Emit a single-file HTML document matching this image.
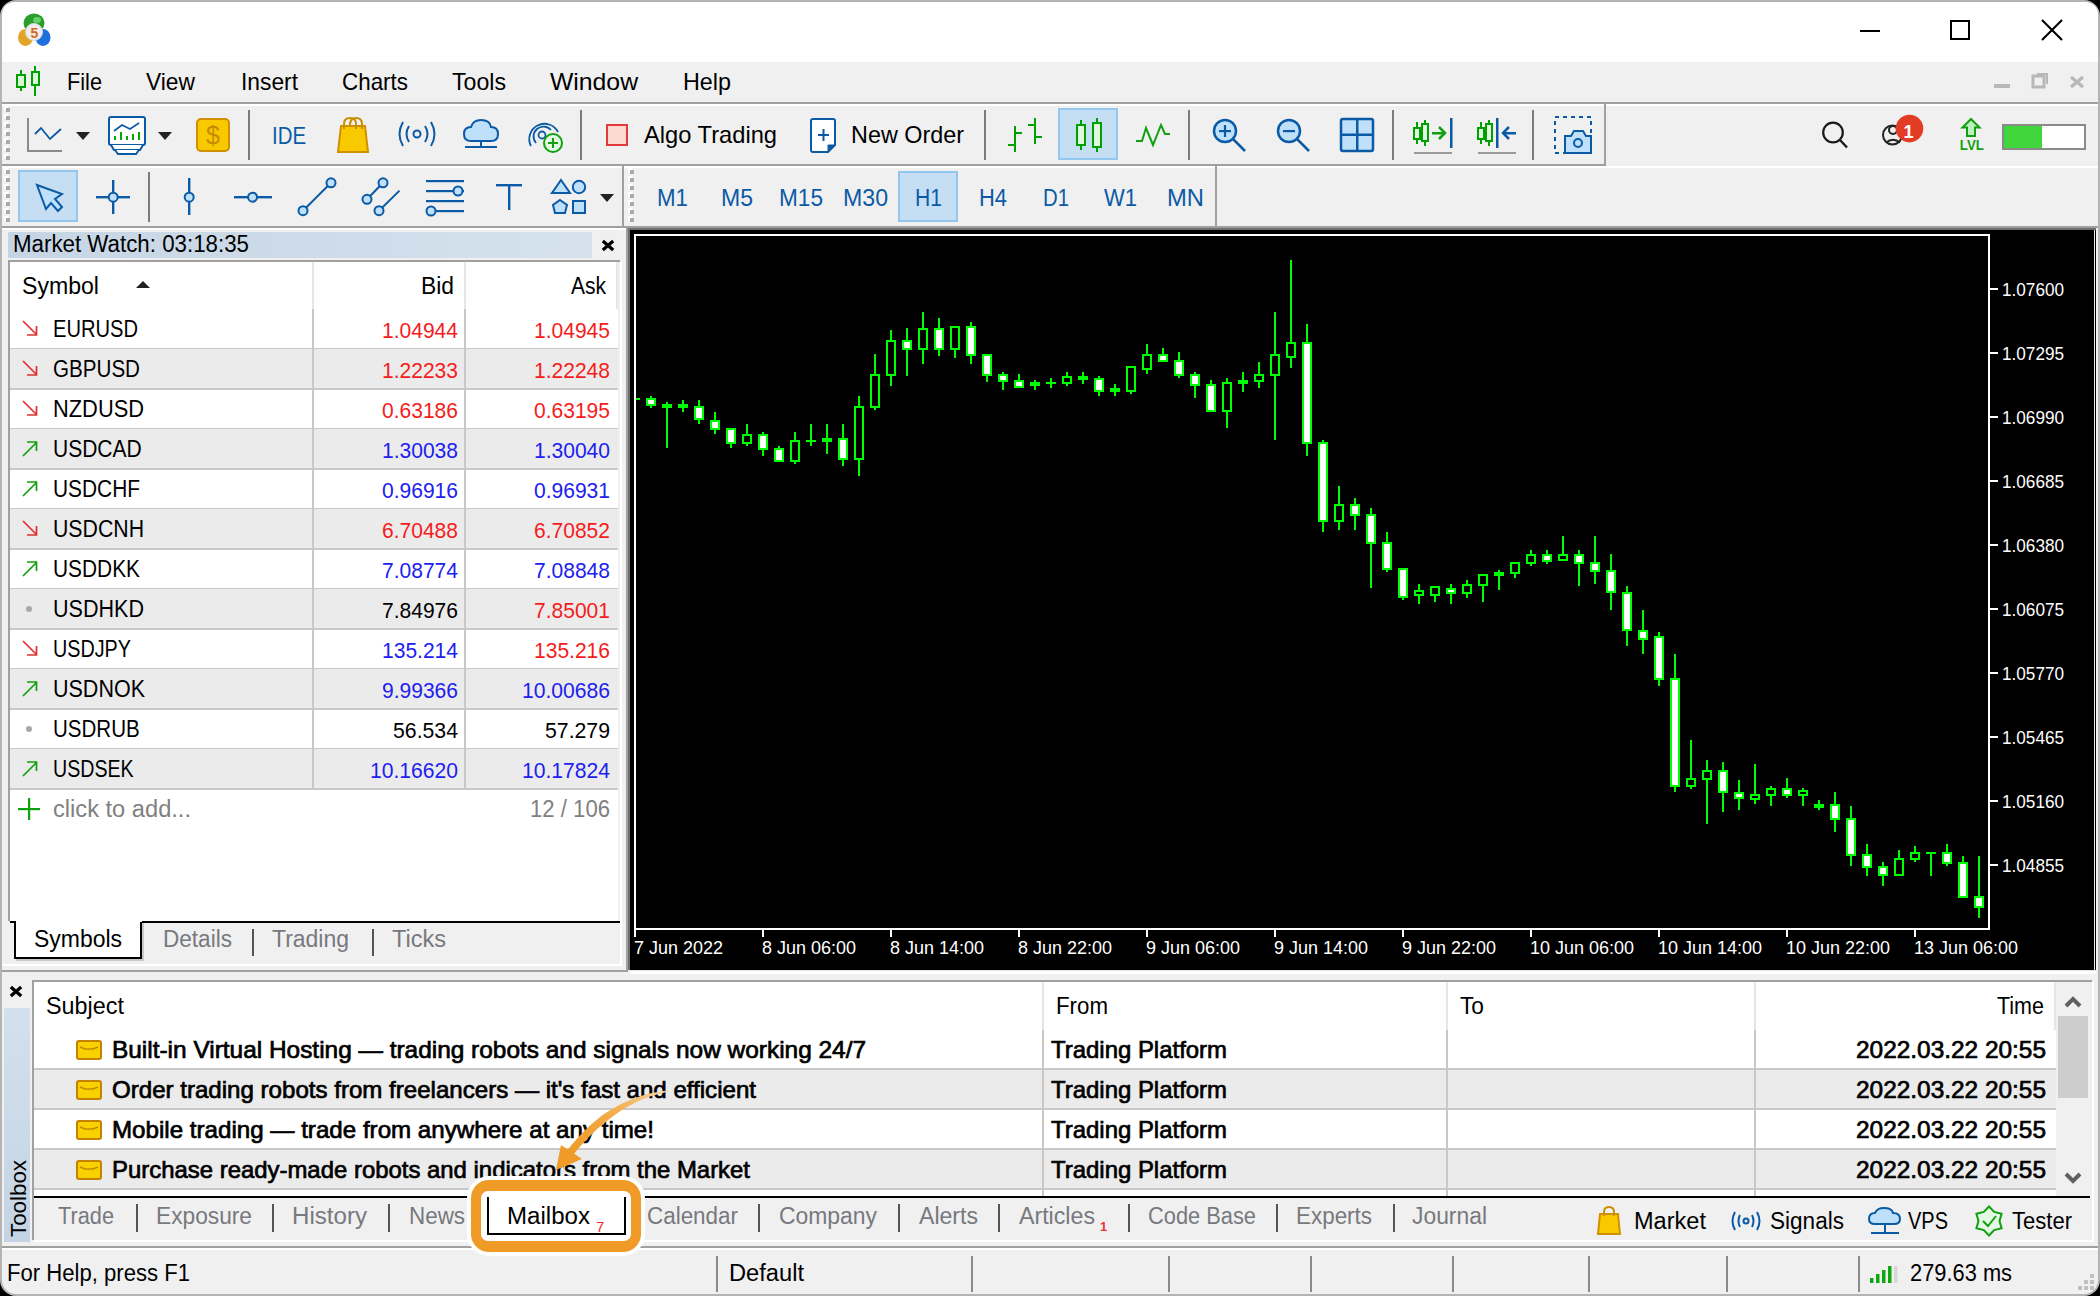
<!DOCTYPE html>
<html><head><meta charset="utf-8"><title>MT5</title>
<style>html,body{margin:0;padding:0;background:#000;overflow:hidden}svg{display:block}text{font-family:"Liberation Sans",sans-serif}</style>
</head><body>
<svg width="2100" height="1296" viewBox="0 0 2100 1296">
<rect x="0" y="0" width="2100" height="1296" fill="#000" />
<rect x="1" y="1" width="2098" height="1294" rx="15" ry="15" fill="#f0f0f0" stroke="#b4b4b4" stroke-width="2"/>
<path d="M2,62 L2,16 Q2,2 16,2 L2084,2 Q2098,2 2098,16 L2098,62 Z" fill="#fff"/>
<rect x="2" y="102" width="2096" height="2" fill="#a0a0a0" />
<rect x="2" y="104" width="2096" height="2" fill="#fff" />
<rect x="2" y="164" width="1604" height="2" fill="#a0a0a0" />
<rect x="2" y="166" width="2096" height="2" fill="#fff" />
<rect x="1604" y="104" width="2" height="61" fill="#a0a0a0" />
<rect x="2" y="226" width="2096" height="2" fill="#a0a0a0" />
<rect x="2" y="228" width="626" height="2" fill="#fff" />
<g id="title">
<rect x="1860" y="30" width="20" height="2" fill="#000" />
<rect x="1951" y="21" width="18" height="18" fill="none" stroke="#000" stroke-width="2"/>
<line x1="2042" y1="20" x2="2062" y2="40" stroke="#000" stroke-width="2.2" />
<line x1="2062" y1="20" x2="2042" y2="40" stroke="#000" stroke-width="2.2" />
<rect x="1994" y="84" width="16" height="4" fill="#b8b8b8" />
<rect x="2033" y="76" width="11" height="11" fill="none" stroke="#b8b8b8" stroke-width="3"/>
<path d="M2037,74 L2047,74 L2047,84" fill="none" stroke="#b8b8b8" stroke-width="2"/>
<line x1="2071" y1="77" x2="2083" y2="87" stroke="#b8b8b8" stroke-width="3.5" />
<line x1="2083" y1="77" x2="2071" y2="87" stroke="#b8b8b8" stroke-width="3.5" />
</g>
<g id="appicon">
<ellipse cx="34" cy="23" rx="10.5" ry="9.5" fill="#2a9e2a"/>
<ellipse cx="37" cy="20" rx="4" ry="3" fill="#6ad06a"/>
<ellipse cx="25.5" cy="37.5" rx="7.5" ry="8.5" fill="#e2a526"/>
<ellipse cx="43" cy="37.5" rx="7.5" ry="8.5" fill="#1f6fdc"/>
<circle cx="34" cy="32" r="8.5" fill="#eeeeee" stroke="#d8d8d8" stroke-width="1"/>
<text x="34.5" y="37.5" font-size="14" fill="#d2691e" text-anchor="middle" font-weight="bold" >5</text>
</g>
<g id="menuicon">
<rect x="20" y="70" width="2" height="21" fill="#00a000" />
<rect x="17" y="75" width="8" height="12" fill="#d8f8d8" stroke="#00a000" stroke-width="2"/>
<rect x="34" y="66" width="2" height="30" fill="#00a000" />
<rect x="32" y="72" width="7" height="13" fill="#d8f8d8" stroke="#00a000" stroke-width="2"/>
</g>
<text x="67" y="90" font-size="24" fill="#000" textLength="35" lengthAdjust="spacingAndGlyphs" >File</text>
<text x="146" y="90" font-size="24" fill="#000" textLength="49" lengthAdjust="spacingAndGlyphs" >View</text>
<text x="241" y="90" font-size="24" fill="#000" textLength="57" lengthAdjust="spacingAndGlyphs" >Insert</text>
<text x="342" y="90" font-size="24" fill="#000" textLength="66" lengthAdjust="spacingAndGlyphs" >Charts</text>
<text x="452" y="90" font-size="24" fill="#000" textLength="54" lengthAdjust="spacingAndGlyphs" >Tools</text>
<text x="550" y="90" font-size="24" fill="#000" textLength="88" lengthAdjust="spacingAndGlyphs" >Window</text>
<text x="683" y="90" font-size="24" fill="#000" textLength="48" lengthAdjust="spacingAndGlyphs" >Help</text>
<g id="tb1">
<rect x="4" y="106" width="4" height="4" fill="#fff" />
<rect x="6" y="108" width="4" height="4" fill="#a9a9a9" />
<rect x="4" y="114" width="4" height="4" fill="#fff" />
<rect x="6" y="116" width="4" height="4" fill="#a9a9a9" />
<rect x="4" y="122" width="4" height="4" fill="#fff" />
<rect x="6" y="124" width="4" height="4" fill="#a9a9a9" />
<rect x="4" y="130" width="4" height="4" fill="#fff" />
<rect x="6" y="132" width="4" height="4" fill="#a9a9a9" />
<rect x="4" y="138" width="4" height="4" fill="#fff" />
<rect x="6" y="140" width="4" height="4" fill="#a9a9a9" />
<rect x="4" y="146" width="4" height="4" fill="#fff" />
<rect x="6" y="148" width="4" height="4" fill="#a9a9a9" />
<rect x="4" y="154" width="4" height="4" fill="#fff" />
<rect x="6" y="156" width="4" height="4" fill="#a9a9a9" />
<rect x="27" y="118" width="2" height="34" fill="#8a8a8a" />
<rect x="27" y="150" width="35" height="2" fill="#8a8a8a" />
<path d="M35,134 L41,128 L50,139 L61,129" fill="none" stroke="#0b5aa5" stroke-width="1.8" />
<path d="M76,132 L90,132 L83,140 Z" fill="#222" stroke="none" stroke-width="2" />
<rect x="109" y="117" width="36" height="28" rx="2" fill="#fff" stroke="#0b5aa5" stroke-width="2"/>
<path d="M111,145 L114,150 L140,150 L143,145" fill="#fff" stroke="#0b5aa5" stroke-width="2" />
<path d="M115,150 L118,154 L136,154 L139,150" fill="#fff" stroke="#0b5aa5" stroke-width="2" />
<path d="M114,131 L122,125 L130,129 L139,123" fill="none" stroke="#0b5aa5" stroke-width="1.6" />
<rect x="114" y="136" width="2" height="4" fill="#00a800" />
<rect x="120" y="132" width="2" height="8" fill="#00a800" />
<rect x="126" y="136" width="2" height="4" fill="#00a800" />
<rect x="132" y="134" width="2" height="6" fill="#00a800" />
<rect x="138" y="132" width="2" height="8" fill="#00a800" />
<path d="M158,132 L172,132 L165,140 Z" fill="#222" stroke="none" stroke-width="2" />
<rect x="197" y="119" width="32" height="32" rx="4" fill="#f9c900" stroke="#d09000" stroke-width="2"/>
<text x="213" y="144" font-size="25" fill="#c88a00" text-anchor="middle" >$</text>
<rect x="248" y="110" width="2" height="50" fill="#7c7c7c" />
<text x="272" y="144" font-size="24" fill="#0b5aa5" textLength="34" lengthAdjust="spacingAndGlyphs" >IDE</text>
<path d="M341,126 L365,126 L368,152 L338,152 Z" fill="#f9c900" stroke="#d09000" stroke-width="2" />
<path d="M344,129 L344,124 Q344,118 350,118 Q356,118 356,124 L356,129" fill="none" stroke="#c89000" stroke-width="2" />
<path d="M350,125 Q350,118 356,118 Q362,118 362,124 L362,129" fill="none" stroke="#c89000" stroke-width="2" />
<circle cx="417" cy="134" r="3.5" fill="none" stroke="#0b5aa5" stroke-width="2"/>
<path d="M409,126 Q404,134 409,142" fill="none" stroke="#0b5aa5" stroke-width="2" />
<path d="M425,126 Q430,134 425,142" fill="none" stroke="#0b5aa5" stroke-width="2" />
<path d="M403,122 Q396,134 403,146" fill="none" stroke="#0b5aa5" stroke-width="2" />
<path d="M431,122 Q438,134 431,146" fill="none" stroke="#0b5aa5" stroke-width="2" />
<path d="M471,141 Q464,141 464,134 Q464,127 471,127 Q473,120 481,120 Q490,120 491,127 Q498,127 498,134 Q498,141 491,141 Z" fill="#bfe0fa" stroke="#0b5aa5" stroke-width="2" />
<rect x="480" y="141" width="2" height="7" fill="#0b5aa5" />
<rect x="465" y="146" width="32" height="2" fill="#0b5aa5" />
<path d="M531,146 A14,14 0 1 1 558,132" fill="none" stroke="#0b5aa5" stroke-width="1.8" />
<path d="M536,143 A9,9 0 1 1 551,130" fill="none" stroke="#0b5aa5" stroke-width="1.8" />
<circle cx="542" cy="135" r="3.5" fill="none" stroke="#0b5aa5" stroke-width="1.8"/>
<circle cx="553" cy="143" r="9" fill="#e4f8e4" stroke="#10a010" stroke-width="2"/>
<rect x="548" y="142" width="10" height="2" fill="#10a010" />
<rect x="552" y="138" width="2" height="10" fill="#10a010" />
<rect x="580" y="110" width="2" height="50" fill="#7c7c7c" />
<rect x="607" y="125" width="20" height="20" fill="#fcd9d2" stroke="#e23a3a" stroke-width="2"/>
<text x="644" y="143" font-size="24" fill="#000" textLength="133" lengthAdjust="spacingAndGlyphs" >Algo Trading</text>
<path d="M811,121 Q811,119 813,119 L833,119 Q835,119 835,121 L835,145 L828,152 L813,152 Q811,152 811,150 Z" fill="#fff" stroke="#0b5aa5" stroke-width="2" />
<path d="M835,145 L828,145 L828,152 Z" fill="#0b5aa5" stroke="#0b5aa5" stroke-width="1" />
<rect x="818" y="134" width="11" height="2" fill="#0b5aa5" />
<rect x="822.5" y="129" width="2" height="12" fill="#0b5aa5" />
<text x="851" y="143" font-size="24" fill="#000" textLength="113" lengthAdjust="spacingAndGlyphs" >New Order</text>
<rect x="984" y="110" width="2" height="50" fill="#7c7c7c" />
<rect x="1014" y="126" width="2" height="26" fill="#00a000" />
<rect x="1008" y="144" width="7" height="2" fill="#00a000" />
<rect x="1015" y="132" width="7" height="2" fill="#00a000" />
<rect x="1034" y="118" width="2" height="26" fill="#00a000" />
<rect x="1028" y="124" width="7" height="2" fill="#00a000" />
<rect x="1035" y="136" width="7" height="2" fill="#00a000" />
<rect x="1059" y="109" width="58" height="50" fill="#c5def4" stroke="#92c8f0" stroke-width="2"/>
<rect x="1080" y="120" width="2" height="30" fill="#00a000" />
<rect x="1077" y="125" width="8" height="20" fill="#e0f8e0" stroke="#00a000" stroke-width="2"/>
<rect x="1096" y="118" width="2" height="34" fill="#00a000" />
<rect x="1093" y="123" width="8" height="24" fill="#e0f8e0" stroke="#00a000" stroke-width="2"/>
<path d="M1136,141 L1142,141 L1146,128 L1153,145 L1161,125 L1165,134 L1170,134" fill="none" stroke="#10a010" stroke-width="2" />
<rect x="1188" y="110" width="2" height="50" fill="#7c7c7c" />
<circle cx="1225" cy="131" r="11" fill="#bfe0fa" stroke="#0b5aa5" stroke-width="2.5"/>
<line x1="1233" y1="139" x2="1245" y2="151" stroke="#0b5aa5" stroke-width="2.5" />
<rect x="1219" y="130" width="12" height="2.2" fill="#0b5aa5" />
<rect x="1223.9" y="125" width="2.2" height="12" fill="#0b5aa5" />
<circle cx="1289" cy="131" r="11" fill="#bfe0fa" stroke="#0b5aa5" stroke-width="2.5"/>
<line x1="1297" y1="139" x2="1309" y2="151" stroke="#0b5aa5" stroke-width="2.5" />
<rect x="1283" y="130" width="12" height="2.2" fill="#0b5aa5" />
<rect x="1341" y="119" width="32" height="32" rx="2" fill="#bfe0fa" stroke="#0b5aa5" stroke-width="2.5"/>
<rect x="1356" y="119" width="2.5" height="32" fill="#0b5aa5" />
<rect x="1341" y="133.5" width="32" height="2.5" fill="#0b5aa5" />
<rect x="1392" y="110" width="2" height="50" fill="#7c7c7c" />
<rect x="1416" y="122" width="2" height="22" fill="#00a000" />
<rect x="1414" y="128" width="6" height="11" fill="#e0f8e0" stroke="#00a000" stroke-width="2"/>
<rect x="1424" y="120" width="2" height="26" fill="#00a000" />
<rect x="1422" y="124" width="6" height="17" fill="#e0f8e0" stroke="#00a000" stroke-width="2"/>
<rect x="1432" y="132" width="13" height="2.5" fill="#10a010" />
<path d="M1439,127 L1445,133 L1439,139" fill="none" stroke="#10a010" stroke-width="2.5" />
<rect x="1450" y="118" width="2.5" height="30" fill="#0b5aa5" />
<rect x="1414" y="152" width="38" height="2" fill="#9a9a9a" />
<rect x="1480" y="122" width="2" height="22" fill="#00a000" />
<rect x="1478" y="128" width="6" height="11" fill="#e0f8e0" stroke="#00a000" stroke-width="2"/>
<rect x="1488" y="120" width="2" height="26" fill="#00a000" />
<rect x="1486" y="124" width="6" height="17" fill="#e0f8e0" stroke="#00a000" stroke-width="2"/>
<rect x="1496" y="118" width="2.5" height="30" fill="#0b5aa5" />
<rect x="1503" y="132" width="13" height="2.5" fill="#0b5aa5" />
<path d="M1509,127 L1503,133 L1509,139" fill="none" stroke="#0b5aa5" stroke-width="2.5" />
<rect x="1478" y="152" width="38" height="2" fill="#9a9a9a" />
<rect x="1532" y="110" width="2" height="50" fill="#7c7c7c" />
<rect x="1555" y="117" width="36" height="36" fill="none" stroke="#0b5aa5" stroke-width="2" stroke-dasharray="4,4"/>
<path d="M1565,153 L1565,136 L1571,136 L1574,131 L1583,131 L1586,136 L1591,136 L1591,153 Z" fill="#bfe0fa" stroke="#0b5aa5" stroke-width="2" />
<circle cx="1578" cy="143" r="4" fill="none" stroke="#0b5aa5" stroke-width="2"/>
<circle cx="1833" cy="132.5" r="9.8" fill="none" stroke="#1a1a1a" stroke-width="2.2"/>
<line x1="1840" y1="140" x2="1847" y2="147.5" stroke="#1a1a1a" stroke-width="2.4" />
<circle cx="1892.5" cy="135" r="9.5" fill="none" stroke="#222" stroke-width="2"/>
<circle cx="1893" cy="130" r="4" fill="none" stroke="#222" stroke-width="2"/>
<path d="M1886,142.5 Q1893,137 1900,142.5" fill="none" stroke="#222" stroke-width="2" />
<circle cx="1909.5" cy="128.6" r="13.8" fill="#e23d24"/>
<text x="1908.5" y="137.5" font-size="18" fill="#fff" text-anchor="middle" font-weight="bold" >1</text>
<path d="M1971,119 L1979.5,127.5 L1975,127.5 L1975,136 L1967,136 L1967,127.5 L1962.5,127.5 Z" fill="#bfeebf" stroke="#10a010" stroke-width="2" />
<text x="1971.8" y="150" font-size="15" fill="#10a010" textLength="24" lengthAdjust="spacingAndGlyphs" text-anchor="middle" font-weight="bold" >LVL</text>
<rect x="2003" y="125" width="82" height="24" fill="#fff" stroke="#8a8a8a" stroke-width="2"/>
<rect x="2004" y="126" width="38" height="22" fill="#41d63b" />
</g>
<g id="tb2">
<rect x="4" y="168" width="4" height="4" fill="#fff" />
<rect x="6" y="170" width="4" height="4" fill="#a9a9a9" />
<rect x="4" y="176" width="4" height="4" fill="#fff" />
<rect x="6" y="178" width="4" height="4" fill="#a9a9a9" />
<rect x="4" y="184" width="4" height="4" fill="#fff" />
<rect x="6" y="186" width="4" height="4" fill="#a9a9a9" />
<rect x="4" y="192" width="4" height="4" fill="#fff" />
<rect x="6" y="194" width="4" height="4" fill="#a9a9a9" />
<rect x="4" y="200" width="4" height="4" fill="#fff" />
<rect x="6" y="202" width="4" height="4" fill="#a9a9a9" />
<rect x="4" y="208" width="4" height="4" fill="#fff" />
<rect x="6" y="210" width="4" height="4" fill="#a9a9a9" />
<rect x="4" y="216" width="4" height="4" fill="#fff" />
<rect x="6" y="218" width="4" height="4" fill="#a9a9a9" />
<rect x="19" y="171" width="58" height="50" fill="#c5def4" stroke="#92c8f0" stroke-width="2"/>
<path d="M37,185 L62,194 L55,199 L62,207 L58,211 L51,203 L46,209 Z" fill="#bfe0fa" stroke="#0b5aa5" stroke-width="2" />
<rect x="96" y="196" width="34" height="2.4" fill="#0b5aa5" />
<rect x="112" y="180" width="2.4" height="34" fill="#0b5aa5" />
<circle cx="113.2" cy="197.2" r="4.5" fill="#bfe0fa" stroke="#0b5aa5" stroke-width="2"/>
<rect x="148" y="172" width="2" height="50" fill="#7c7c7c" />
<rect x="188" y="178" width="2.4" height="37" fill="#0b5aa5" />
<circle cx="189.2" cy="197.2" r="4.5" fill="#bfe0fa" stroke="#0b5aa5" stroke-width="2"/>
<rect x="234" y="196" width="38" height="2.4" fill="#0b5aa5" />
<circle cx="252.6" cy="197.2" r="4.5" fill="#bfe0fa" stroke="#0b5aa5" stroke-width="2"/>
<line x1="303" y1="210.7" x2="331" y2="182.8" stroke="#0b5aa5" stroke-width="2" />
<circle cx="303" cy="210.7" r="4.5" fill="#bfe0fa" stroke="#0b5aa5" stroke-width="2"/>
<circle cx="331" cy="182.8" r="4.5" fill="#bfe0fa" stroke="#0b5aa5" stroke-width="2"/>
<line x1="367" y1="199.3" x2="383" y2="182.8" stroke="#0b5aa5" stroke-width="2" />
<line x1="379" y1="210.7" x2="399.5" y2="190.6" stroke="#0b5aa5" stroke-width="2" />
<circle cx="367" cy="199.3" r="4.5" fill="#bfe0fa" stroke="#0b5aa5" stroke-width="2"/>
<circle cx="383" cy="182.8" r="4.5" fill="#bfe0fa" stroke="#0b5aa5" stroke-width="2"/>
<circle cx="379" cy="210.7" r="4.5" fill="#bfe0fa" stroke="#0b5aa5" stroke-width="2"/>
<rect x="426" y="180" width="38" height="2.2" fill="#0b5aa5" />
<rect x="426" y="190" width="38" height="2.2" fill="#0b5aa5" />
<rect x="426" y="200" width="38" height="2.2" fill="#0b5aa5" />
<rect x="426" y="210" width="38" height="2.2" fill="#0b5aa5" />
<circle cx="458" cy="191" r="4.5" fill="#bfe0fa" stroke="#0b5aa5" stroke-width="2"/>
<circle cx="431" cy="211" r="4.5" fill="#bfe0fa" stroke="#0b5aa5" stroke-width="2"/>
<rect x="496" y="184" width="26" height="2.4" fill="#0b5aa5" />
<rect x="508" y="184" width="2.4" height="26" fill="#0b5aa5" />
<path d="M561,180 L570,193 L552,193 Z" fill="#bfe0fa" stroke="#0b5aa5" stroke-width="2" />
<circle cx="579" cy="187" r="6.2" fill="#bfe0fa" stroke="#0b5aa5" stroke-width="2"/>
<path d="M560,200 L567,205 L565,213 L555,213 L553,205 Z" fill="#bfe0fa" stroke="#0b5aa5" stroke-width="2" />
<rect x="573" y="201" width="12" height="12" fill="#bfe0fa" stroke="#0b5aa5" stroke-width="2"/>
<path d="M600,194 L614,194 L607,202 Z" fill="#222" stroke="none" stroke-width="2" />
<rect x="622" y="166" width="2" height="60" fill="#a0a0a0" />
<rect x="628" y="168" width="4" height="4" fill="#fff" />
<rect x="630" y="170" width="4" height="4" fill="#a9a9a9" />
<rect x="628" y="176" width="4" height="4" fill="#fff" />
<rect x="630" y="178" width="4" height="4" fill="#a9a9a9" />
<rect x="628" y="184" width="4" height="4" fill="#fff" />
<rect x="630" y="186" width="4" height="4" fill="#a9a9a9" />
<rect x="628" y="192" width="4" height="4" fill="#fff" />
<rect x="630" y="194" width="4" height="4" fill="#a9a9a9" />
<rect x="628" y="200" width="4" height="4" fill="#fff" />
<rect x="630" y="202" width="4" height="4" fill="#a9a9a9" />
<rect x="628" y="208" width="4" height="4" fill="#fff" />
<rect x="630" y="210" width="4" height="4" fill="#a9a9a9" />
<rect x="628" y="216" width="4" height="4" fill="#fff" />
<rect x="630" y="218" width="4" height="4" fill="#a9a9a9" />
<rect x="899" y="172" width="58" height="49" fill="#c5def4" stroke="#92c8f0" stroke-width="2"/>
<text x="657" y="206" font-size="23" fill="#0b5aa5" textLength="31" lengthAdjust="spacingAndGlyphs" >M1</text>
<text x="721" y="206" font-size="23" fill="#0b5aa5" textLength="32" lengthAdjust="spacingAndGlyphs" >M5</text>
<text x="779" y="206" font-size="23" fill="#0b5aa5" textLength="44" lengthAdjust="spacingAndGlyphs" >M15</text>
<text x="843" y="206" font-size="23" fill="#0b5aa5" textLength="45" lengthAdjust="spacingAndGlyphs" >M30</text>
<text x="915" y="206" font-size="23" fill="#0b5aa5" textLength="27" lengthAdjust="spacingAndGlyphs" >H1</text>
<text x="979" y="206" font-size="23" fill="#0b5aa5" textLength="28" lengthAdjust="spacingAndGlyphs" >H4</text>
<text x="1043" y="206" font-size="23" fill="#0b5aa5" textLength="26" lengthAdjust="spacingAndGlyphs" >D1</text>
<text x="1104" y="206" font-size="23" fill="#0b5aa5" textLength="33" lengthAdjust="spacingAndGlyphs" >W1</text>
<text x="1167" y="206" font-size="23" fill="#0b5aa5" textLength="37" lengthAdjust="spacingAndGlyphs" >MN</text>
<rect x="1215" y="166" width="2" height="60" fill="#a0a0a0" />
</g>
<g id="mw">
<defs><linearGradient id="mwg" x1="0" y1="0" x2="1" y2="0"><stop offset="0" stop-color="#c6d5e4"/><stop offset="1" stop-color="#d5e2ee"/></linearGradient><linearGradient id="tbg" x1="0" y1="0" x2="0" y2="1"><stop offset="0" stop-color="#d3e0ed"/><stop offset="1" stop-color="#c4d4e4"/></linearGradient></defs>
<rect x="8" y="232" width="584" height="26" fill="url(#mwg)" />
<text x="13" y="252" font-size="23.5" fill="#000" textLength="236" lengthAdjust="spacingAndGlyphs" >Market Watch: 03:18:35</text>
<path d="M604,242 L612,249 M612,242 L604,249" fill="none" stroke="#000" stroke-width="3.2" stroke-linecap="square"/>
<rect x="8" y="260" width="612" height="2" fill="#a0a0a0" />
<rect x="8" y="260" width="2" height="661" fill="#a0a0a0" />
<rect x="10" y="262" width="608" height="659" fill="#fff" />
<rect x="312" y="262" width="2" height="47" fill="#e6e6e6" />
<rect x="464" y="262" width="2" height="47" fill="#e6e6e6" />
<rect x="616" y="262" width="2" height="47" fill="#e6e6e6" />
<text x="22" y="294" font-size="23.5" fill="#000" textLength="77" lengthAdjust="spacingAndGlyphs" >Symbol</text>
<path d="M136,288 L150,288 L143,281 Z" fill="#222" stroke="none" stroke-width="2" />
<text x="454" y="294" font-size="23.5" fill="#000" textLength="33" lengthAdjust="spacingAndGlyphs" text-anchor="end" >Bid</text>
<text x="606" y="294" font-size="23.5" fill="#000" textLength="35" lengthAdjust="spacingAndGlyphs" text-anchor="end" >Ask</text>
<rect x="10" y="348" width="608" height="2" fill="#c8c8c8" />
<rect x="312" y="309" width="2" height="40" fill="#c8c8c8" />
<rect x="464" y="309" width="2" height="40" fill="#c8c8c8" />
<path d="M23,321 L36,334 M27,335 L36.5,335 L36.5,326" fill="none" stroke="#e23030" stroke-width="1.7" />
<text x="53" y="337" font-size="23" fill="#000" textLength="85" lengthAdjust="spacingAndGlyphs" >EURUSD</text>
<text x="458" y="338" font-size="22.5" fill="#f51c1c" textLength="76" lengthAdjust="spacingAndGlyphs" text-anchor="end" >1.04944</text>
<text x="610" y="338" font-size="22.5" fill="#f51c1c" textLength="76" lengthAdjust="spacingAndGlyphs" text-anchor="end" >1.04945</text>
<rect x="10" y="349" width="608" height="39" fill="#ebebeb" />
<rect x="10" y="388" width="608" height="2" fill="#c8c8c8" />
<rect x="312" y="349" width="2" height="40" fill="#c8c8c8" />
<rect x="464" y="349" width="2" height="40" fill="#c8c8c8" />
<path d="M23,361 L36,374 M27,375 L36.5,375 L36.5,366" fill="none" stroke="#e23030" stroke-width="1.7" />
<text x="53" y="377" font-size="23" fill="#000" textLength="87" lengthAdjust="spacingAndGlyphs" >GBPUSD</text>
<text x="458" y="378" font-size="22.5" fill="#f51c1c" textLength="76" lengthAdjust="spacingAndGlyphs" text-anchor="end" >1.22233</text>
<text x="610" y="378" font-size="22.5" fill="#f51c1c" textLength="76" lengthAdjust="spacingAndGlyphs" text-anchor="end" >1.22248</text>
<rect x="10" y="428" width="608" height="2" fill="#c8c8c8" />
<rect x="312" y="389" width="2" height="40" fill="#c8c8c8" />
<rect x="464" y="389" width="2" height="40" fill="#c8c8c8" />
<path d="M23,401 L36,414 M27,415 L36.5,415 L36.5,406" fill="none" stroke="#e23030" stroke-width="1.7" />
<text x="53" y="417" font-size="23" fill="#000" textLength="91" lengthAdjust="spacingAndGlyphs" >NZDUSD</text>
<text x="458" y="418" font-size="22.5" fill="#f51c1c" textLength="76" lengthAdjust="spacingAndGlyphs" text-anchor="end" >0.63186</text>
<text x="610" y="418" font-size="22.5" fill="#f51c1c" textLength="76" lengthAdjust="spacingAndGlyphs" text-anchor="end" >0.63195</text>
<rect x="10" y="429" width="608" height="39" fill="#ebebeb" />
<rect x="10" y="468" width="608" height="2" fill="#c8c8c8" />
<rect x="312" y="429" width="2" height="40" fill="#c8c8c8" />
<rect x="464" y="429" width="2" height="40" fill="#c8c8c8" />
<path d="M23,456 L36,443 M27,442 L36.5,442 L36.5,451" fill="none" stroke="#10a010" stroke-width="1.7" />
<text x="53" y="457" font-size="23" fill="#000" textLength="88.7" lengthAdjust="spacingAndGlyphs" >USDCAD</text>
<text x="458" y="458" font-size="22.5" fill="#2020f0" textLength="76" lengthAdjust="spacingAndGlyphs" text-anchor="end" >1.30038</text>
<text x="610" y="458" font-size="22.5" fill="#2020f0" textLength="76" lengthAdjust="spacingAndGlyphs" text-anchor="end" >1.30040</text>
<rect x="10" y="508" width="608" height="2" fill="#c8c8c8" />
<rect x="312" y="469" width="2" height="40" fill="#c8c8c8" />
<rect x="464" y="469" width="2" height="40" fill="#c8c8c8" />
<path d="M23,496 L36,483 M27,482 L36.5,482 L36.5,491" fill="none" stroke="#10a010" stroke-width="1.7" />
<text x="53" y="497" font-size="23" fill="#000" textLength="87" lengthAdjust="spacingAndGlyphs" >USDCHF</text>
<text x="458" y="498" font-size="22.5" fill="#2020f0" textLength="76" lengthAdjust="spacingAndGlyphs" text-anchor="end" >0.96916</text>
<text x="610" y="498" font-size="22.5" fill="#2020f0" textLength="76" lengthAdjust="spacingAndGlyphs" text-anchor="end" >0.96931</text>
<rect x="10" y="509" width="608" height="39" fill="#ebebeb" />
<rect x="10" y="548" width="608" height="2" fill="#c8c8c8" />
<rect x="312" y="509" width="2" height="40" fill="#c8c8c8" />
<rect x="464" y="509" width="2" height="40" fill="#c8c8c8" />
<path d="M23,521 L36,534 M27,535 L36.5,535 L36.5,526" fill="none" stroke="#e23030" stroke-width="1.7" />
<text x="53" y="537" font-size="23" fill="#000" textLength="91" lengthAdjust="spacingAndGlyphs" >USDCNH</text>
<text x="458" y="538" font-size="22.5" fill="#f51c1c" textLength="76" lengthAdjust="spacingAndGlyphs" text-anchor="end" >6.70488</text>
<text x="610" y="538" font-size="22.5" fill="#f51c1c" textLength="76" lengthAdjust="spacingAndGlyphs" text-anchor="end" >6.70852</text>
<rect x="10" y="588" width="608" height="2" fill="#c8c8c8" />
<rect x="312" y="549" width="2" height="40" fill="#c8c8c8" />
<rect x="464" y="549" width="2" height="40" fill="#c8c8c8" />
<path d="M23,576 L36,563 M27,562 L36.5,562 L36.5,571" fill="none" stroke="#10a010" stroke-width="1.7" />
<text x="53" y="577" font-size="23" fill="#000" textLength="87" lengthAdjust="spacingAndGlyphs" >USDDKK</text>
<text x="458" y="578" font-size="22.5" fill="#2020f0" textLength="76" lengthAdjust="spacingAndGlyphs" text-anchor="end" >7.08774</text>
<text x="610" y="578" font-size="22.5" fill="#2020f0" textLength="76" lengthAdjust="spacingAndGlyphs" text-anchor="end" >7.08848</text>
<rect x="10" y="589" width="608" height="39" fill="#ebebeb" />
<rect x="10" y="628" width="608" height="2" fill="#c8c8c8" />
<rect x="312" y="589" width="2" height="40" fill="#c8c8c8" />
<rect x="464" y="589" width="2" height="40" fill="#c8c8c8" />
<circle cx="29" cy="609" r="3" fill="#a8a8a8"/>
<text x="53" y="617" font-size="23" fill="#000" textLength="91" lengthAdjust="spacingAndGlyphs" >USDHKD</text>
<text x="458" y="618" font-size="22.5" fill="#000" textLength="76" lengthAdjust="spacingAndGlyphs" text-anchor="end" >7.84976</text>
<text x="610" y="618" font-size="22.5" fill="#f51c1c" textLength="76" lengthAdjust="spacingAndGlyphs" text-anchor="end" >7.85001</text>
<rect x="10" y="668" width="608" height="2" fill="#c8c8c8" />
<rect x="312" y="629" width="2" height="40" fill="#c8c8c8" />
<rect x="464" y="629" width="2" height="40" fill="#c8c8c8" />
<path d="M23,641 L36,654 M27,655 L36.5,655 L36.5,646" fill="none" stroke="#e23030" stroke-width="1.7" />
<text x="53" y="657" font-size="23" fill="#000" textLength="78" lengthAdjust="spacingAndGlyphs" >USDJPY</text>
<text x="458" y="658" font-size="22.5" fill="#2020f0" textLength="76" lengthAdjust="spacingAndGlyphs" text-anchor="end" >135.214</text>
<text x="610" y="658" font-size="22.5" fill="#f51c1c" textLength="76" lengthAdjust="spacingAndGlyphs" text-anchor="end" >135.216</text>
<rect x="10" y="669" width="608" height="39" fill="#ebebeb" />
<rect x="10" y="708" width="608" height="2" fill="#c8c8c8" />
<rect x="312" y="669" width="2" height="40" fill="#c8c8c8" />
<rect x="464" y="669" width="2" height="40" fill="#c8c8c8" />
<path d="M23,696 L36,683 M27,682 L36.5,682 L36.5,691" fill="none" stroke="#10a010" stroke-width="1.7" />
<text x="53" y="697" font-size="23" fill="#000" textLength="92" lengthAdjust="spacingAndGlyphs" >USDNOK</text>
<text x="458" y="698" font-size="22.5" fill="#2020f0" textLength="76" lengthAdjust="spacingAndGlyphs" text-anchor="end" >9.99366</text>
<text x="610" y="698" font-size="22.5" fill="#2020f0" textLength="88" lengthAdjust="spacingAndGlyphs" text-anchor="end" >10.00686</text>
<rect x="10" y="748" width="608" height="2" fill="#c8c8c8" />
<rect x="312" y="709" width="2" height="40" fill="#c8c8c8" />
<rect x="464" y="709" width="2" height="40" fill="#c8c8c8" />
<circle cx="29" cy="729" r="3" fill="#a8a8a8"/>
<text x="53" y="737" font-size="23" fill="#000" textLength="86.7" lengthAdjust="spacingAndGlyphs" >USDRUB</text>
<text x="458" y="738" font-size="22.5" fill="#000" textLength="65" lengthAdjust="spacingAndGlyphs" text-anchor="end" >56.534</text>
<text x="610" y="738" font-size="22.5" fill="#000" textLength="65" lengthAdjust="spacingAndGlyphs" text-anchor="end" >57.279</text>
<rect x="10" y="749" width="608" height="39" fill="#ebebeb" />
<rect x="10" y="788" width="608" height="2" fill="#c8c8c8" />
<rect x="312" y="749" width="2" height="40" fill="#c8c8c8" />
<rect x="464" y="749" width="2" height="40" fill="#c8c8c8" />
<path d="M23,776 L36,763 M27,762 L36.5,762 L36.5,771" fill="none" stroke="#10a010" stroke-width="1.7" />
<text x="53" y="777" font-size="23" fill="#000" textLength="80.7" lengthAdjust="spacingAndGlyphs" >USDSEK</text>
<text x="458" y="778" font-size="22.5" fill="#2020f0" textLength="88" lengthAdjust="spacingAndGlyphs" text-anchor="end" >10.16620</text>
<text x="610" y="778" font-size="22.5" fill="#2020f0" textLength="88" lengthAdjust="spacingAndGlyphs" text-anchor="end" >10.17824</text>
<rect x="18" y="808" width="22" height="2.2" fill="#10a010" />
<rect x="28" y="798" width="2.2" height="22" fill="#10a010" />
<text x="53" y="817" font-size="23.5" fill="#808080" textLength="138" lengthAdjust="spacingAndGlyphs" >click to add...</text>
<text x="610" y="817" font-size="23.5" fill="#808080" textLength="80" lengthAdjust="spacingAndGlyphs" text-anchor="end" >12 / 106</text>
<rect x="10" y="921" width="608" height="43" fill="#f0f0f0" />
<rect x="10" y="921" width="610" height="2" fill="#000" />
<rect x="14" y="921" width="128" height="38" fill="#fff" />
<path d="M15,921 L15,958 L141,958 L141,922" fill="none" stroke="#000" stroke-width="2" />
<rect x="142" y="923" width="2" height="37" fill="#c8c8c8" />
<rect x="16" y="959" width="128" height="2" fill="#c8c8c8" />
<text x="34" y="947" font-size="23.5" fill="#000" textLength="88" lengthAdjust="spacingAndGlyphs" >Symbols</text>
<text x="163" y="947" font-size="23.5" fill="#77797e" textLength="69" lengthAdjust="spacingAndGlyphs" >Details</text>
<text x="272" y="947" font-size="23.5" fill="#77797e" textLength="77" lengthAdjust="spacingAndGlyphs" >Trading</text>
<text x="392" y="947" font-size="23.5" fill="#77797e" textLength="54" lengthAdjust="spacingAndGlyphs" >Ticks</text>
<rect x="252" y="929" width="2" height="27" fill="#555" />
<rect x="372" y="929" width="2" height="27" fill="#555" />
<rect x="2" y="964" width="620" height="2" fill="#fff" />
<rect x="620" y="262" width="2" height="704" fill="#fff" />
<rect x="2" y="970" width="626" height="2" fill="#a0a0a0" />
<rect x="626" y="228" width="2" height="744" fill="#a0a0a0" />
</g>
<g id="chart">
<rect x="628" y="228" width="1468" height="742" fill="#000" />
<rect x="628" y="228" width="1468" height="2" fill="#6e6e6e" />
<rect x="628" y="228" width="2" height="742" fill="#6e6e6e" />
<rect x="630" y="970" width="1466" height="1" fill="#e4e4e4" />
<rect x="2094" y="230" width="1" height="741" fill="#e4e4e4" />
<rect x="630" y="971" width="1466" height="3" fill="#fff" />
<g shape-rendering="crispEdges">
<rect x="636" y="398" width="4" height="2" fill="#00ff00" />
<rect x="650" y="396" width="2" height="12" fill="#00ff00" />
<rect x="646" y="398" width="10" height="8" fill="#00ff00" />
<rect x="648" y="400" width="6" height="4" fill="#fff" />
<rect x="666" y="402" width="2" height="46" fill="#00ff00" />
<rect x="662" y="404" width="10" height="4" fill="#00ff00" />
<rect x="682" y="400" width="2" height="12" fill="#00ff00" />
<rect x="678" y="404" width="10" height="4" fill="#00ff00" />
<rect x="698" y="400" width="2" height="24" fill="#00ff00" />
<rect x="694" y="406" width="10" height="14" fill="#00ff00" />
<rect x="696" y="408" width="6" height="10" fill="#fff" />
<rect x="714" y="412" width="2" height="22" fill="#00ff00" />
<rect x="710" y="420" width="10" height="10" fill="#00ff00" />
<rect x="712" y="422" width="6" height="6" fill="#fff" />
<rect x="730" y="428" width="2" height="20" fill="#00ff00" />
<rect x="726" y="428" width="10" height="16" fill="#00ff00" />
<rect x="728" y="430" width="6" height="12" fill="#fff" />
<rect x="746" y="424" width="2" height="22" fill="#00ff00" />
<rect x="742" y="434" width="10" height="10" fill="#00ff00" />
<rect x="744" y="436" width="6" height="6" fill="#000" />
<rect x="762" y="432" width="2" height="24" fill="#00ff00" />
<rect x="758" y="434" width="10" height="16" fill="#00ff00" />
<rect x="760" y="436" width="6" height="12" fill="#fff" />
<rect x="778" y="446" width="2" height="16" fill="#00ff00" />
<rect x="774" y="448" width="10" height="14" fill="#00ff00" />
<rect x="776" y="450" width="6" height="10" fill="#fff" />
<rect x="794" y="432" width="2" height="32" fill="#00ff00" />
<rect x="790" y="440" width="10" height="22" fill="#00ff00" />
<rect x="792" y="442" width="6" height="18" fill="#000" />
<rect x="810" y="424" width="2" height="22" fill="#00ff00" />
<rect x="806" y="440" width="10" height="2" fill="#00ff00" />
<rect x="826" y="424" width="2" height="30" fill="#00ff00" />
<rect x="822" y="438" width="10" height="4" fill="#00ff00" />
<rect x="842" y="424" width="2" height="42" fill="#00ff00" />
<rect x="838" y="438" width="10" height="22" fill="#00ff00" />
<rect x="840" y="440" width="6" height="18" fill="#fff" />
<rect x="858" y="396" width="2" height="80" fill="#00ff00" />
<rect x="854" y="406" width="10" height="54" fill="#00ff00" />
<rect x="856" y="408" width="6" height="50" fill="#000" />
<rect x="874" y="354" width="2" height="56" fill="#00ff00" />
<rect x="870" y="374" width="10" height="34" fill="#00ff00" />
<rect x="872" y="376" width="6" height="30" fill="#000" />
<rect x="890" y="330" width="2" height="56" fill="#00ff00" />
<rect x="886" y="340" width="10" height="36" fill="#00ff00" />
<rect x="888" y="342" width="6" height="32" fill="#000" />
<rect x="906" y="328" width="2" height="48" fill="#00ff00" />
<rect x="902" y="340" width="10" height="10" fill="#00ff00" />
<rect x="904" y="342" width="6" height="6" fill="#fff" />
<rect x="922" y="312" width="2" height="52" fill="#00ff00" />
<rect x="918" y="328" width="10" height="22" fill="#00ff00" />
<rect x="920" y="330" width="6" height="18" fill="#000" />
<rect x="938" y="318" width="2" height="38" fill="#00ff00" />
<rect x="934" y="328" width="10" height="22" fill="#00ff00" />
<rect x="936" y="330" width="6" height="18" fill="#fff" />
<rect x="954" y="326" width="2" height="32" fill="#00ff00" />
<rect x="950" y="326" width="10" height="24" fill="#00ff00" />
<rect x="952" y="328" width="6" height="20" fill="#000" />
<rect x="970" y="322" width="2" height="42" fill="#00ff00" />
<rect x="966" y="326" width="10" height="30" fill="#00ff00" />
<rect x="968" y="328" width="6" height="26" fill="#fff" />
<rect x="986" y="354" width="2" height="28" fill="#00ff00" />
<rect x="982" y="354" width="10" height="22" fill="#00ff00" />
<rect x="984" y="356" width="6" height="18" fill="#fff" />
<rect x="1002" y="372" width="2" height="18" fill="#00ff00" />
<rect x="998" y="374" width="10" height="8" fill="#00ff00" />
<rect x="1000" y="376" width="6" height="4" fill="#fff" />
<rect x="1018" y="374" width="2" height="14" fill="#00ff00" />
<rect x="1014" y="380" width="10" height="8" fill="#00ff00" />
<rect x="1016" y="382" width="6" height="4" fill="#fff" />
<rect x="1034" y="380" width="2" height="10" fill="#00ff00" />
<rect x="1030" y="382" width="10" height="4" fill="#00ff00" />
<rect x="1050" y="378" width="2" height="10" fill="#00ff00" />
<rect x="1046" y="382" width="10" height="2" fill="#00ff00" />
<rect x="1066" y="372" width="2" height="14" fill="#00ff00" />
<rect x="1062" y="376" width="10" height="8" fill="#00ff00" />
<rect x="1064" y="378" width="6" height="4" fill="#000" />
<rect x="1082" y="372" width="2" height="12" fill="#00ff00" />
<rect x="1078" y="376" width="10" height="4" fill="#00ff00" />
<rect x="1098" y="376" width="2" height="20" fill="#00ff00" />
<rect x="1094" y="378" width="10" height="14" fill="#00ff00" />
<rect x="1096" y="380" width="6" height="10" fill="#fff" />
<rect x="1114" y="384" width="2" height="12" fill="#00ff00" />
<rect x="1110" y="388" width="10" height="4" fill="#00ff00" />
<rect x="1130" y="366" width="2" height="28" fill="#00ff00" />
<rect x="1126" y="366" width="10" height="26" fill="#00ff00" />
<rect x="1128" y="368" width="6" height="22" fill="#000" />
<rect x="1146" y="344" width="2" height="30" fill="#00ff00" />
<rect x="1142" y="354" width="10" height="16" fill="#00ff00" />
<rect x="1144" y="356" width="6" height="12" fill="#000" />
<rect x="1162" y="348" width="2" height="14" fill="#00ff00" />
<rect x="1158" y="354" width="10" height="8" fill="#00ff00" />
<rect x="1160" y="356" width="6" height="4" fill="#fff" />
<rect x="1178" y="352" width="2" height="26" fill="#00ff00" />
<rect x="1174" y="360" width="10" height="16" fill="#00ff00" />
<rect x="1176" y="362" width="6" height="12" fill="#fff" />
<rect x="1194" y="372" width="2" height="26" fill="#00ff00" />
<rect x="1190" y="374" width="10" height="12" fill="#00ff00" />
<rect x="1192" y="376" width="6" height="8" fill="#fff" />
<rect x="1210" y="380" width="2" height="32" fill="#00ff00" />
<rect x="1206" y="384" width="10" height="28" fill="#00ff00" />
<rect x="1208" y="386" width="6" height="24" fill="#fff" />
<rect x="1226" y="378" width="2" height="50" fill="#00ff00" />
<rect x="1222" y="382" width="10" height="30" fill="#00ff00" />
<rect x="1224" y="384" width="6" height="26" fill="#000" />
<rect x="1242" y="372" width="2" height="20" fill="#00ff00" />
<rect x="1238" y="380" width="10" height="4" fill="#00ff00" />
<rect x="1258" y="362" width="2" height="26" fill="#00ff00" />
<rect x="1254" y="374" width="10" height="8" fill="#00ff00" />
<rect x="1256" y="376" width="6" height="4" fill="#000" />
<rect x="1274" y="312" width="2" height="128" fill="#00ff00" />
<rect x="1270" y="354" width="10" height="22" fill="#00ff00" />
<rect x="1272" y="356" width="6" height="18" fill="#000" />
<rect x="1290" y="260" width="2" height="108" fill="#00ff00" />
<rect x="1286" y="342" width="10" height="16" fill="#00ff00" />
<rect x="1288" y="344" width="6" height="12" fill="#000" />
<rect x="1306" y="324" width="2" height="132" fill="#00ff00" />
<rect x="1302" y="342" width="10" height="102" fill="#00ff00" />
<rect x="1304" y="344" width="6" height="98" fill="#fff" />
<rect x="1322" y="440" width="2" height="92" fill="#00ff00" />
<rect x="1318" y="442" width="10" height="80" fill="#00ff00" />
<rect x="1320" y="444" width="6" height="76" fill="#fff" />
<rect x="1338" y="486" width="2" height="44" fill="#00ff00" />
<rect x="1334" y="504" width="10" height="18" fill="#00ff00" />
<rect x="1336" y="506" width="6" height="14" fill="#000" />
<rect x="1354" y="498" width="2" height="32" fill="#00ff00" />
<rect x="1350" y="504" width="10" height="12" fill="#00ff00" />
<rect x="1352" y="506" width="6" height="8" fill="#fff" />
<rect x="1370" y="508" width="2" height="80" fill="#00ff00" />
<rect x="1366" y="514" width="10" height="30" fill="#00ff00" />
<rect x="1368" y="516" width="6" height="26" fill="#fff" />
<rect x="1386" y="532" width="2" height="40" fill="#00ff00" />
<rect x="1382" y="542" width="10" height="28" fill="#00ff00" />
<rect x="1384" y="544" width="6" height="24" fill="#fff" />
<rect x="1402" y="568" width="2" height="32" fill="#00ff00" />
<rect x="1398" y="568" width="10" height="30" fill="#00ff00" />
<rect x="1400" y="570" width="6" height="26" fill="#fff" />
<rect x="1418" y="584" width="2" height="20" fill="#00ff00" />
<rect x="1414" y="590" width="10" height="6" fill="#00ff00" />
<rect x="1416" y="592" width="6" height="2" fill="#000" />
<rect x="1434" y="586" width="2" height="16" fill="#00ff00" />
<rect x="1430" y="586" width="10" height="10" fill="#00ff00" />
<rect x="1432" y="588" width="6" height="6" fill="#000" />
<rect x="1450" y="584" width="2" height="20" fill="#00ff00" />
<rect x="1446" y="588" width="10" height="6" fill="#00ff00" />
<rect x="1448" y="590" width="6" height="2" fill="#fff" />
<rect x="1466" y="580" width="2" height="18" fill="#00ff00" />
<rect x="1462" y="584" width="10" height="10" fill="#00ff00" />
<rect x="1464" y="586" width="6" height="6" fill="#000" />
<rect x="1482" y="574" width="2" height="28" fill="#00ff00" />
<rect x="1478" y="574" width="10" height="12" fill="#00ff00" />
<rect x="1480" y="576" width="6" height="8" fill="#000" />
<rect x="1498" y="570" width="2" height="20" fill="#00ff00" />
<rect x="1494" y="572" width="10" height="4" fill="#00ff00" />
<rect x="1514" y="562" width="2" height="16" fill="#00ff00" />
<rect x="1510" y="562" width="10" height="12" fill="#00ff00" />
<rect x="1512" y="564" width="6" height="8" fill="#000" />
<rect x="1530" y="550" width="2" height="16" fill="#00ff00" />
<rect x="1526" y="554" width="10" height="10" fill="#00ff00" />
<rect x="1528" y="556" width="6" height="6" fill="#000" />
<rect x="1546" y="550" width="2" height="14" fill="#00ff00" />
<rect x="1542" y="554" width="10" height="8" fill="#00ff00" />
<rect x="1544" y="556" width="6" height="4" fill="#fff" />
<rect x="1562" y="536" width="2" height="25" fill="#00ff00" />
<rect x="1558" y="554" width="10" height="7" fill="#00ff00" />
<rect x="1560" y="556" width="6" height="3" fill="#000" />
<rect x="1578" y="550" width="2" height="36" fill="#00ff00" />
<rect x="1574" y="554" width="10" height="10" fill="#00ff00" />
<rect x="1576" y="556" width="6" height="6" fill="#fff" />
<rect x="1594" y="536" width="2" height="48" fill="#00ff00" />
<rect x="1590" y="562" width="10" height="10" fill="#00ff00" />
<rect x="1592" y="564" width="6" height="6" fill="#fff" />
<rect x="1610" y="554" width="2" height="56" fill="#00ff00" />
<rect x="1606" y="570" width="10" height="23" fill="#00ff00" />
<rect x="1608" y="572" width="6" height="19" fill="#fff" />
<rect x="1626" y="586" width="2" height="60" fill="#00ff00" />
<rect x="1622" y="592" width="10" height="39" fill="#00ff00" />
<rect x="1624" y="594" width="6" height="35" fill="#fff" />
<rect x="1642" y="610" width="2" height="44" fill="#00ff00" />
<rect x="1638" y="630" width="10" height="10" fill="#00ff00" />
<rect x="1640" y="632" width="6" height="6" fill="#fff" />
<rect x="1658" y="632" width="2" height="54" fill="#00ff00" />
<rect x="1654" y="636" width="10" height="44" fill="#00ff00" />
<rect x="1656" y="638" width="6" height="40" fill="#fff" />
<rect x="1674" y="654" width="2" height="138" fill="#00ff00" />
<rect x="1670" y="678" width="10" height="109" fill="#00ff00" />
<rect x="1672" y="680" width="6" height="105" fill="#fff" />
<rect x="1690" y="740" width="2" height="49" fill="#00ff00" />
<rect x="1686" y="778" width="10" height="9" fill="#00ff00" />
<rect x="1688" y="780" width="6" height="5" fill="#000" />
<rect x="1706" y="760" width="2" height="64" fill="#00ff00" />
<rect x="1702" y="770" width="10" height="10" fill="#00ff00" />
<rect x="1704" y="772" width="6" height="6" fill="#000" />
<rect x="1722" y="762" width="2" height="50" fill="#00ff00" />
<rect x="1718" y="770" width="10" height="23" fill="#00ff00" />
<rect x="1720" y="772" width="6" height="19" fill="#fff" />
<rect x="1738" y="780" width="2" height="30" fill="#00ff00" />
<rect x="1734" y="792" width="10" height="7" fill="#00ff00" />
<rect x="1736" y="794" width="6" height="3" fill="#fff" />
<rect x="1754" y="764" width="2" height="40" fill="#00ff00" />
<rect x="1750" y="794" width="10" height="6" fill="#00ff00" />
<rect x="1752" y="796" width="6" height="2" fill="#000" />
<rect x="1770" y="786" width="2" height="20" fill="#00ff00" />
<rect x="1766" y="788" width="10" height="8" fill="#00ff00" />
<rect x="1768" y="790" width="6" height="4" fill="#000" />
<rect x="1786" y="778" width="2" height="20" fill="#00ff00" />
<rect x="1782" y="788" width="10" height="8" fill="#00ff00" />
<rect x="1784" y="790" width="6" height="4" fill="#fff" />
<rect x="1802" y="788" width="2" height="18" fill="#00ff00" />
<rect x="1798" y="790" width="10" height="6" fill="#00ff00" />
<rect x="1800" y="792" width="6" height="2" fill="#000" />
<rect x="1818" y="800" width="2" height="10" fill="#00ff00" />
<rect x="1814" y="804" width="10" height="4" fill="#00ff00" />
<rect x="1834" y="792" width="2" height="40" fill="#00ff00" />
<rect x="1830" y="804" width="10" height="16" fill="#00ff00" />
<rect x="1832" y="806" width="6" height="12" fill="#fff" />
<rect x="1850" y="806" width="2" height="60" fill="#00ff00" />
<rect x="1846" y="818" width="10" height="38" fill="#00ff00" />
<rect x="1848" y="820" width="6" height="34" fill="#fff" />
<rect x="1866" y="844" width="2" height="32" fill="#00ff00" />
<rect x="1862" y="854" width="10" height="14" fill="#00ff00" />
<rect x="1864" y="856" width="6" height="10" fill="#fff" />
<rect x="1882" y="862" width="2" height="24" fill="#00ff00" />
<rect x="1878" y="866" width="10" height="10" fill="#00ff00" />
<rect x="1880" y="868" width="6" height="6" fill="#fff" />
<rect x="1898" y="850" width="2" height="26" fill="#00ff00" />
<rect x="1894" y="858" width="10" height="18" fill="#00ff00" />
<rect x="1896" y="860" width="6" height="14" fill="#000" />
<rect x="1914" y="846" width="2" height="16" fill="#00ff00" />
<rect x="1910" y="852" width="10" height="8" fill="#00ff00" />
<rect x="1912" y="854" width="6" height="4" fill="#000" />
<rect x="1930" y="852" width="2" height="24" fill="#00ff00" />
<rect x="1926" y="852" width="10" height="2" fill="#00ff00" />
<rect x="1946" y="844" width="2" height="22" fill="#00ff00" />
<rect x="1942" y="852" width="10" height="12" fill="#00ff00" />
<rect x="1944" y="854" width="6" height="8" fill="#fff" />
<rect x="1962" y="856" width="2" height="42" fill="#00ff00" />
<rect x="1958" y="862" width="10" height="36" fill="#00ff00" />
<rect x="1960" y="864" width="6" height="32" fill="#fff" />
<rect x="1978" y="856" width="2" height="62" fill="#00ff00" />
<rect x="1974" y="896" width="10" height="12" fill="#00ff00" />
<rect x="1976" y="898" width="6" height="8" fill="#fff" />
</g>
<rect x="634" y="234" width="1356" height="2" fill="#fff" />
<rect x="634" y="234" width="2" height="695" fill="#fff" />
<rect x="1988" y="234" width="2" height="695" fill="#fff" />
<rect x="634" y="928" width="1356" height="2" fill="#fff" />
<rect x="1990" y="288" width="8" height="2" fill="#fff" />
<text x="2002" y="296" font-size="19" fill="#fff" textLength="62" lengthAdjust="spacingAndGlyphs" >1.07600</text>
<rect x="1990" y="352" width="8" height="2" fill="#fff" />
<text x="2002" y="360" font-size="19" fill="#fff" textLength="62" lengthAdjust="spacingAndGlyphs" >1.07295</text>
<rect x="1990" y="416" width="8" height="2" fill="#fff" />
<text x="2002" y="424" font-size="19" fill="#fff" textLength="62" lengthAdjust="spacingAndGlyphs" >1.06990</text>
<rect x="1990" y="480" width="8" height="2" fill="#fff" />
<text x="2002" y="488" font-size="19" fill="#fff" textLength="62" lengthAdjust="spacingAndGlyphs" >1.06685</text>
<rect x="1990" y="544" width="8" height="2" fill="#fff" />
<text x="2002" y="552" font-size="19" fill="#fff" textLength="62" lengthAdjust="spacingAndGlyphs" >1.06380</text>
<rect x="1990" y="608" width="8" height="2" fill="#fff" />
<text x="2002" y="616" font-size="19" fill="#fff" textLength="62" lengthAdjust="spacingAndGlyphs" >1.06075</text>
<rect x="1990" y="672" width="8" height="2" fill="#fff" />
<text x="2002" y="680" font-size="19" fill="#fff" textLength="62" lengthAdjust="spacingAndGlyphs" >1.05770</text>
<rect x="1990" y="736" width="8" height="2" fill="#fff" />
<text x="2002" y="744" font-size="19" fill="#fff" textLength="62" lengthAdjust="spacingAndGlyphs" >1.05465</text>
<rect x="1990" y="800" width="8" height="2" fill="#fff" />
<text x="2002" y="808" font-size="19" fill="#fff" textLength="62" lengthAdjust="spacingAndGlyphs" >1.05160</text>
<rect x="1990" y="864" width="8" height="2" fill="#fff" />
<text x="2002" y="872" font-size="19" fill="#fff" textLength="62" lengthAdjust="spacingAndGlyphs" >1.04855</text>
<rect x="634" y="930" width="2" height="7" fill="#fff" />
<text x="634" y="954" font-size="19" fill="#fff" textLength="89" lengthAdjust="spacingAndGlyphs" >7 Jun 2022</text>
<rect x="762" y="930" width="2" height="7" fill="#fff" />
<text x="762" y="954" font-size="19" fill="#fff" textLength="94" lengthAdjust="spacingAndGlyphs" >8 Jun 06:00</text>
<rect x="890" y="930" width="2" height="7" fill="#fff" />
<text x="890" y="954" font-size="19" fill="#fff" textLength="94" lengthAdjust="spacingAndGlyphs" >8 Jun 14:00</text>
<rect x="1018" y="930" width="2" height="7" fill="#fff" />
<text x="1018" y="954" font-size="19" fill="#fff" textLength="94" lengthAdjust="spacingAndGlyphs" >8 Jun 22:00</text>
<rect x="1146" y="930" width="2" height="7" fill="#fff" />
<text x="1146" y="954" font-size="19" fill="#fff" textLength="94" lengthAdjust="spacingAndGlyphs" >9 Jun 06:00</text>
<rect x="1274" y="930" width="2" height="7" fill="#fff" />
<text x="1274" y="954" font-size="19" fill="#fff" textLength="94" lengthAdjust="spacingAndGlyphs" >9 Jun 14:00</text>
<rect x="1402" y="930" width="2" height="7" fill="#fff" />
<text x="1402" y="954" font-size="19" fill="#fff" textLength="94" lengthAdjust="spacingAndGlyphs" >9 Jun 22:00</text>
<rect x="1530" y="930" width="2" height="7" fill="#fff" />
<text x="1530" y="954" font-size="19" fill="#fff" textLength="104" lengthAdjust="spacingAndGlyphs" >10 Jun 06:00</text>
<rect x="1658" y="930" width="2" height="7" fill="#fff" />
<text x="1658" y="954" font-size="19" fill="#fff" textLength="104" lengthAdjust="spacingAndGlyphs" >10 Jun 14:00</text>
<rect x="1786" y="930" width="2" height="7" fill="#fff" />
<text x="1786" y="954" font-size="19" fill="#fff" textLength="104" lengthAdjust="spacingAndGlyphs" >10 Jun 22:00</text>
<rect x="1914" y="930" width="2" height="7" fill="#fff" />
<text x="1914" y="954" font-size="19" fill="#fff" textLength="104" lengthAdjust="spacingAndGlyphs" >13 Jun 06:00</text>
</g>
<g id="toolbox">
<path d="M12,988 L20,995 M20,988 L12,995" fill="none" stroke="#000" stroke-width="3.2" stroke-linecap="square"/>
<rect x="4" y="1008" width="26" height="234" fill="url(#tbg)" />
<text x="0" y="0" font-size="22" fill="#000" transform="translate(26,1237) rotate(-90)" textLength="77" lengthAdjust="spacingAndGlyphs">Toolbox</text>
<rect x="32" y="980" width="2060" height="2" fill="#a0a0a0" />
<rect x="32" y="980" width="2" height="260" fill="#a0a0a0" />
<rect x="34" y="982" width="2022" height="214" fill="#fff" />
<rect x="1042" y="982" width="2" height="48" fill="#e6e6e6" />
<rect x="1446" y="982" width="2" height="48" fill="#e6e6e6" />
<rect x="1754" y="982" width="2" height="48" fill="#e6e6e6" />
<rect x="2054" y="982" width="2" height="48" fill="#e6e6e6" />
<text x="46" y="1014" font-size="23.5" fill="#000" textLength="78" lengthAdjust="spacingAndGlyphs" >Subject</text>
<text x="1056" y="1014" font-size="23.5" fill="#000" textLength="52" lengthAdjust="spacingAndGlyphs" >From</text>
<text x="1460" y="1014" font-size="23.5" fill="#000" textLength="24" lengthAdjust="spacingAndGlyphs" >To</text>
<text x="2044" y="1014" font-size="23.5" fill="#000" textLength="47" lengthAdjust="spacingAndGlyphs" text-anchor="end" >Time</text>
<rect x="34" y="1068" width="2022" height="2" fill="#c8c8c8" />
<rect x="1042" y="1030" width="2" height="40" fill="#c8c8c8" />
<rect x="1446" y="1030" width="2" height="40" fill="#c8c8c8" />
<rect x="1754" y="1030" width="2" height="40" fill="#c8c8c8" />
<rect x="77" y="1041" width="24" height="18" rx="2" fill="#f9d000" stroke="#c48200" stroke-width="2"/>
<path d="M80,1047 L85,1049 L93,1049 L98,1047" fill="none" stroke="#c48a00" stroke-width="1.4" />
<text x="112" y="1058" font-size="24" fill="#000" textLength="754" lengthAdjust="spacingAndGlyphs" stroke="#000" stroke-width="0.7">Built-in Virtual Hosting — trading robots and signals now working 24/7</text>
<text x="1051" y="1058" font-size="24" fill="#000" textLength="176" lengthAdjust="spacingAndGlyphs" stroke="#000" stroke-width="0.7">Trading Platform</text>
<text x="2046" y="1058" font-size="24" fill="#000" textLength="190" lengthAdjust="spacingAndGlyphs" text-anchor="end" stroke="#000" stroke-width="0.7">2022.03.22 20:55</text>
<rect x="34" y="1070" width="2022" height="39" fill="#ebebeb" />
<rect x="34" y="1108" width="2022" height="2" fill="#c8c8c8" />
<rect x="1042" y="1070" width="2" height="40" fill="#c8c8c8" />
<rect x="1446" y="1070" width="2" height="40" fill="#c8c8c8" />
<rect x="1754" y="1070" width="2" height="40" fill="#c8c8c8" />
<rect x="77" y="1081" width="24" height="18" rx="2" fill="#f9d000" stroke="#c48200" stroke-width="2"/>
<path d="M80,1087 L85,1089 L93,1089 L98,1087" fill="none" stroke="#c48a00" stroke-width="1.4" />
<text x="112" y="1098" font-size="24" fill="#000" textLength="644" lengthAdjust="spacingAndGlyphs" stroke="#000" stroke-width="0.7">Order trading robots from freelancers — it&#x27;s fast and efficient</text>
<text x="1051" y="1098" font-size="24" fill="#000" textLength="176" lengthAdjust="spacingAndGlyphs" stroke="#000" stroke-width="0.7">Trading Platform</text>
<text x="2046" y="1098" font-size="24" fill="#000" textLength="190" lengthAdjust="spacingAndGlyphs" text-anchor="end" stroke="#000" stroke-width="0.7">2022.03.22 20:55</text>
<rect x="34" y="1148" width="2022" height="2" fill="#c8c8c8" />
<rect x="1042" y="1110" width="2" height="40" fill="#c8c8c8" />
<rect x="1446" y="1110" width="2" height="40" fill="#c8c8c8" />
<rect x="1754" y="1110" width="2" height="40" fill="#c8c8c8" />
<rect x="77" y="1121" width="24" height="18" rx="2" fill="#f9d000" stroke="#c48200" stroke-width="2"/>
<path d="M80,1127 L85,1129 L93,1129 L98,1127" fill="none" stroke="#c48a00" stroke-width="1.4" />
<text x="112" y="1138" font-size="24" fill="#000" textLength="542" lengthAdjust="spacingAndGlyphs" stroke="#000" stroke-width="0.7">Mobile trading — trade from anywhere at any time!</text>
<text x="1051" y="1138" font-size="24" fill="#000" textLength="176" lengthAdjust="spacingAndGlyphs" stroke="#000" stroke-width="0.7">Trading Platform</text>
<text x="2046" y="1138" font-size="24" fill="#000" textLength="190" lengthAdjust="spacingAndGlyphs" text-anchor="end" stroke="#000" stroke-width="0.7">2022.03.22 20:55</text>
<rect x="34" y="1150" width="2022" height="39" fill="#ebebeb" />
<rect x="34" y="1188" width="2022" height="2" fill="#c8c8c8" />
<rect x="1042" y="1150" width="2" height="40" fill="#c8c8c8" />
<rect x="1446" y="1150" width="2" height="40" fill="#c8c8c8" />
<rect x="1754" y="1150" width="2" height="40" fill="#c8c8c8" />
<rect x="77" y="1161" width="24" height="18" rx="2" fill="#f9d000" stroke="#c48200" stroke-width="2"/>
<path d="M80,1167 L85,1169 L93,1169 L98,1167" fill="none" stroke="#c48a00" stroke-width="1.4" />
<text x="112" y="1178" font-size="24" fill="#000" textLength="638" lengthAdjust="spacingAndGlyphs" stroke="#000" stroke-width="0.7">Purchase ready-made robots and indicators from the Market</text>
<text x="1051" y="1178" font-size="24" fill="#000" textLength="176" lengthAdjust="spacingAndGlyphs" stroke="#000" stroke-width="0.7">Trading Platform</text>
<text x="2046" y="1178" font-size="24" fill="#000" textLength="190" lengthAdjust="spacingAndGlyphs" text-anchor="end" stroke="#000" stroke-width="0.7">2022.03.22 20:55</text>
<rect x="1042" y="1190" width="2" height="6" fill="#c8c8c8" />
<rect x="1446" y="1190" width="2" height="6" fill="#c8c8c8" />
<rect x="1754" y="1190" width="2" height="6" fill="#c8c8c8" />
<rect x="2056" y="982" width="36" height="214" fill="#f0f0f0" />
<path d="M2066,1006 L2073,999 L2080,1006" fill="none" stroke="#606060" stroke-width="4" />
<rect x="2058" y="1016" width="30" height="82" fill="#cdcdcd" />
<path d="M2066,1174 L2073,1181 L2080,1174" fill="none" stroke="#606060" stroke-width="4" />
<rect x="2092" y="982" width="2" height="260" fill="#fff" />
<rect x="34" y="1196" width="2056" height="2" fill="#000" />
<rect x="34" y="1240" width="2060" height="2" fill="#fff" />
<rect x="2" y="1246" width="2096" height="2" fill="#a0a0a0" />
<rect x="2" y="1248" width="2096" height="2" fill="#fff" />
<text x="58" y="1224" font-size="23.5" fill="#77797e" textLength="56" lengthAdjust="spacingAndGlyphs" >Trade</text>
<text x="156" y="1224" font-size="23.5" fill="#77797e" textLength="96" lengthAdjust="spacingAndGlyphs" >Exposure</text>
<text x="292" y="1224" font-size="23.5" fill="#77797e" textLength="75" lengthAdjust="spacingAndGlyphs" >History</text>
<text x="409" y="1224" font-size="23.5" fill="#77797e" textLength="56" lengthAdjust="spacingAndGlyphs" >News</text>
<text x="647" y="1224" font-size="23.5" fill="#77797e" textLength="91" lengthAdjust="spacingAndGlyphs" >Calendar</text>
<text x="779" y="1224" font-size="23.5" fill="#77797e" textLength="98" lengthAdjust="spacingAndGlyphs" >Company</text>
<text x="919" y="1224" font-size="23.5" fill="#77797e" textLength="59" lengthAdjust="spacingAndGlyphs" >Alerts</text>
<text x="1019" y="1224" font-size="23.5" fill="#77797e" textLength="76" lengthAdjust="spacingAndGlyphs" >Articles</text>
<text x="1148" y="1224" font-size="23.5" fill="#77797e" textLength="108" lengthAdjust="spacingAndGlyphs" >Code Base</text>
<text x="1296" y="1224" font-size="23.5" fill="#77797e" textLength="76" lengthAdjust="spacingAndGlyphs" >Experts</text>
<text x="1412" y="1224" font-size="23.5" fill="#77797e" textLength="75" lengthAdjust="spacingAndGlyphs" >Journal</text>
<rect x="136" y="1204" width="2" height="28" fill="#555" />
<rect x="272" y="1204" width="2" height="28" fill="#555" />
<rect x="388" y="1204" width="2" height="28" fill="#555" />
<rect x="758" y="1204" width="2" height="28" fill="#555" />
<rect x="898" y="1204" width="2" height="28" fill="#555" />
<rect x="998" y="1204" width="2" height="28" fill="#555" />
<rect x="1128" y="1204" width="2" height="28" fill="#555" />
<rect x="1276" y="1204" width="2" height="28" fill="#555" />
<rect x="1393" y="1204" width="2" height="28" fill="#555" />
<text x="1100" y="1231" font-size="13" fill="#f03030" font-weight="bold" >1</text>
<path d="M1600,1214 L1618,1214 L1620,1234 L1598,1234 Z" fill="#f9c900" stroke="#d09000" stroke-width="2" />
<path d="M1604,1216 L1604,1212 Q1604,1207 1609,1207 Q1614,1207 1614,1212 L1614,1216" fill="none" stroke="#c89000" stroke-width="2" />
<text x="1634" y="1229" font-size="23.5" fill="#000" textLength="72" lengthAdjust="spacingAndGlyphs" >Market</text>
<circle cx="1746" cy="1221" r="2.5" fill="none" stroke="#0b5aa5" stroke-width="2"/>
<path d="M1740,1215 Q1737,1221 1740,1227 M1752,1215 Q1755,1221 1752,1227 M1735,1212 Q1730,1221 1735,1230 M1757,1212 Q1762,1221 1757,1230" fill="none" stroke="#0b5aa5" stroke-width="2" />
<text x="1770" y="1229" font-size="23.5" fill="#000" textLength="74" lengthAdjust="spacingAndGlyphs" >Signals</text>
<path d="M1875,1224 Q1869,1224 1869,1219 Q1869,1213 1875,1213 Q1877,1208 1884,1208 Q1892,1208 1893,1213 Q1900,1213 1900,1219 Q1900,1224 1894,1224 Z" fill="#bfe0fa" stroke="#0b5aa5" stroke-width="2" />
<rect x="1884" y="1224" width="2" height="8" fill="#0b5aa5" />
<rect x="1871" y="1232" width="28" height="2" fill="#0b5aa5" />
<text x="1908" y="1229" font-size="23.5" fill="#000" textLength="40" lengthAdjust="spacingAndGlyphs" >VPS</text>
<polygon points="1989.0,1206.5 1994.2,1211.9 2001.6,1213.8 1999.5,1221.0 2001.6,1228.2 1994.2,1230.1 1989.0,1235.5 1983.8,1230.1 1976.4,1228.2 1978.5,1221.0 1976.4,1213.8 1983.8,1211.9" fill="#e4f8e4" stroke="#10a010" stroke-width="2"/>
<path d="M1983,1221 L1988,1226 L1996,1216" fill="none" stroke="#10a010" stroke-width="2" />
<text x="2012" y="1229" font-size="23.5" fill="#000" textLength="60" lengthAdjust="spacingAndGlyphs" >Tester</text>
</g>
<g id="status">
<text x="7" y="1281" font-size="23.5" fill="#000" textLength="183" lengthAdjust="spacingAndGlyphs" >For Help, press F1</text>
<rect x="716" y="1256" width="2" height="36" fill="#8a8a8a" />
<rect x="971" y="1256" width="2" height="36" fill="#8a8a8a" />
<rect x="1168" y="1256" width="2" height="36" fill="#8a8a8a" />
<rect x="1310" y="1256" width="2" height="36" fill="#8a8a8a" />
<rect x="1452" y="1256" width="2" height="36" fill="#8a8a8a" />
<rect x="1588" y="1256" width="2" height="36" fill="#8a8a8a" />
<rect x="1726" y="1256" width="2" height="36" fill="#8a8a8a" />
<rect x="1858" y="1256" width="2" height="36" fill="#8a8a8a" />
<text x="729" y="1281" font-size="23.5" fill="#000" textLength="75" lengthAdjust="spacingAndGlyphs" >Default</text>
<rect x="1870" y="1278" width="3.5" height="5" fill="#10a810" />
<rect x="1876" y="1274" width="3.5" height="9" fill="#10a810" />
<rect x="1882" y="1270" width="3.5" height="13" fill="#10a810" />
<rect x="1888" y="1266" width="3.5" height="17" fill="#10a810" />
<rect x="1894" y="1266" width="3.5" height="17" fill="#d8d8d8" />
<text x="1910" y="1281" font-size="23.5" fill="#000" textLength="102" lengthAdjust="spacingAndGlyphs" >279.63 ms</text>
<rect x="2090" y="1274" width="4" height="4" fill="#c0c0c0" />
<rect x="2084" y="1280" width="4" height="4" fill="#c0c0c0" />
<rect x="2090" y="1280" width="4" height="4" fill="#c0c0c0" />
<rect x="2078" y="1286" width="4" height="4" fill="#c0c0c0" />
<rect x="2084" y="1286" width="4" height="4" fill="#c0c0c0" />
<rect x="2090" y="1286" width="4" height="4" fill="#c0c0c0" />
</g>
<g id="hl">
<rect x="467" y="1176" width="178" height="80" rx="22" fill="#fff"/>
<rect x="471" y="1180" width="170" height="72" rx="18" fill="#f09a28"/>
<rect x="481" y="1191" width="150" height="50" rx="7" fill="#fff"/>
<path d="M488,1197 L488,1234 L625,1234 L625,1197" fill="none" stroke="#000" stroke-width="2" />
<text x="507" y="1224" font-size="23.5" fill="#000" textLength="83" lengthAdjust="spacingAndGlyphs" >Mailbox</text>
<text x="596" y="1232" font-size="15" fill="#f03030" >7</text>
<defs><linearGradient id="ag" x1="668" y1="1092" x2="570" y2="1152" gradientUnits="userSpaceOnUse"><stop offset="0" stop-color="#f7d4a0"/><stop offset="0.5" stop-color="#f2ad4c"/><stop offset="1" stop-color="#f09a28"/></linearGradient></defs>
<path d="M668.9,1090.4 L666.0,1090.7 L663.2,1091.1 L660.3,1091.5 L657.5,1092.0 L654.7,1092.5 L651.9,1093.1 L649.1,1093.8 L646.3,1094.5 L643.5,1095.3 L640.8,1096.1 L638.1,1097.0 L635.3,1098.0 L632.6,1099.0 L629.9,1100.1 L627.3,1101.2 L624.6,1102.4 L621.9,1103.7 L619.3,1105.0 L616.7,1106.4 L614.1,1107.9 L611.5,1109.4 L608.9,1110.9 L606.4,1112.6 L603.8,1114.2 L601.3,1116.0 L598.9,1117.9 L596.5,1119.9 L594.1,1121.9 L591.7,1124.0 L589.4,1126.1 L587.1,1128.3 L584.8,1130.6 L582.5,1132.9 L580.2,1135.3 L578.0,1137.7 L575.7,1140.2 L573.5,1142.7 L571.3,1145.3 L569.2,1148.0 L567.0,1150.7 L573.0,1155.3 L575.0,1152.7 L577.1,1150.1 L579.2,1147.6 L581.4,1145.1 L583.5,1142.7 L585.7,1140.4 L587.8,1138.1 L590.0,1135.9 L592.3,1133.7 L594.5,1131.6 L596.7,1129.6 L599.0,1127.6 L601.3,1125.6 L603.6,1123.8 L605.9,1121.9 L608.2,1120.1 L610.4,1118.3 L612.7,1116.5 L615.1,1114.8 L617.4,1113.1 L619.8,1111.5 L622.2,1110.0 L624.6,1108.5 L627.0,1107.1 L629.5,1105.7 L631.9,1104.4 L634.4,1103.1 L637.0,1101.9 L639.5,1100.7 L642.1,1099.6 L644.7,1098.6 L647.3,1097.6 L649.9,1096.6 L652.6,1095.7 L655.3,1094.9 L658.0,1094.1 L660.7,1093.4 L663.5,1092.8 L666.3,1092.1 L669.1,1091.6 Z" fill="url(#ag)"/>
<path d="M556,1170 L561,1145 L582,1159 Z" fill="#f09a28" stroke="none" stroke-width="2" />
</g>
</svg>
</body></html>
